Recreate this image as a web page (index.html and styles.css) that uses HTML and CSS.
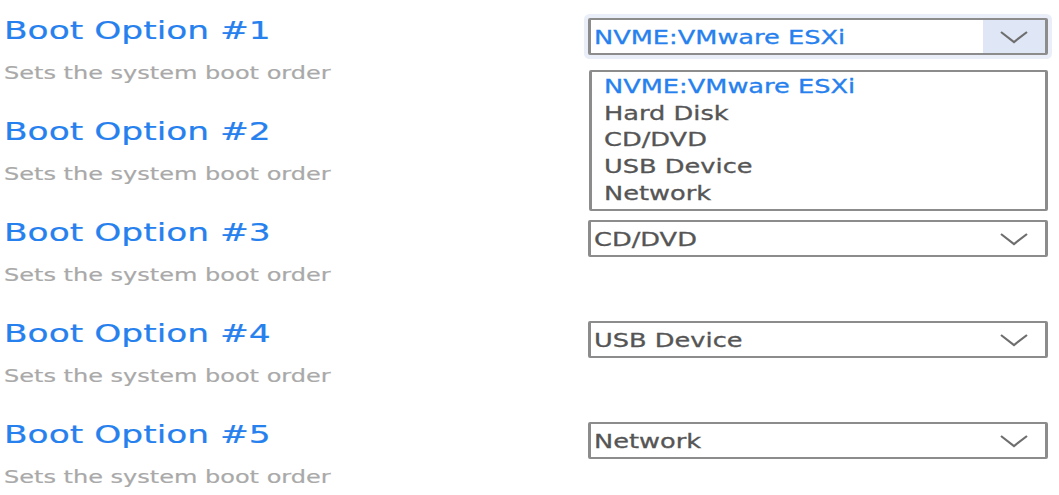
FILE: index.html
```html
<!DOCTYPE html>
<html lang="en">
<head>
    <meta charset="UTF-8">
    <meta name="viewport" content="width=device-width, initial-scale=1.0">
    <title>Boot Order</title>
    <link rel="stylesheet" href="styles.css">
</head>
<body>
    <main class="settings">

        <section class="option">
            <div class="option-text">
                <h2 class="option-title"><span class="wide">Boot Option #1</span></h2>
                <p class="option-desc"><span class="wide">Sets the system boot order</span></p>
            </div>
            <div class="picker">
                <div class="select is-focused">
                    <span class="select-value"><span class="wide">NVME:VMware ESXi</span></span>
                    <span class="select-arrow">
                        <svg width="28" height="14" viewBox="0 0 28 14"><polyline points="1,2 14,12 27,2" fill="none" stroke="#6e6e6e" stroke-width="2.2"/></svg>
                    </span>
                </div>
                <!-- open list sits over option #2 -->
                <ul class="select-list">
                    <li class="is-current"><span class="wide">NVME:VMware ESXi</span></li>
                    <li><span class="wide">Hard Disk</span></li>
                    <li><span class="wide">CD/DVD</span></li>
                    <li><span class="wide">USB Device</span></li>
                    <li><span class="wide">Network</span></li>
                </ul>
            </div>
        </section>

        <section class="option">
            <div class="option-text">
                <h2 class="option-title"><span class="wide">Boot Option #2</span></h2>
                <p class="option-desc"><span class="wide">Sets the system boot order</span></p>
            </div>
        </section>

        <section class="option">
            <div class="option-text">
                <h2 class="option-title"><span class="wide">Boot Option #3</span></h2>
                <p class="option-desc"><span class="wide">Sets the system boot order</span></p>
            </div>
            <div class="picker">
                <div class="select">
                    <span class="select-value"><span class="wide">CD/DVD</span></span>
                    <span class="select-arrow">
                        <svg width="28" height="14" viewBox="0 0 28 14"><polyline points="1,2 14,12 27,2" fill="none" stroke="#6e6e6e" stroke-width="2.2"/></svg>
                    </span>
                </div>
            </div>
        </section>

        <section class="option">
            <div class="option-text">
                <h2 class="option-title"><span class="wide">Boot Option #4</span></h2>
                <p class="option-desc"><span class="wide">Sets the system boot order</span></p>
            </div>
            <div class="picker">
                <div class="select">
                    <span class="select-value"><span class="wide">USB Device</span></span>
                    <span class="select-arrow">
                        <svg width="28" height="14" viewBox="0 0 28 14"><polyline points="1,2 14,12 27,2" fill="none" stroke="#6e6e6e" stroke-width="2.2"/></svg>
                    </span>
                </div>
            </div>
        </section>

        <section class="option">
            <div class="option-text">
                <h2 class="option-title"><span class="wide">Boot Option #5</span></h2>
                <p class="option-desc"><span class="wide">Sets the system boot order</span></p>
            </div>
            <div class="picker">
                <div class="select">
                    <span class="select-value"><span class="wide">Network</span></span>
                    <span class="select-arrow">
                        <svg width="28" height="14" viewBox="0 0 28 14"><polyline points="1,2 14,12 27,2" fill="none" stroke="#6e6e6e" stroke-width="2.2"/></svg>
                    </span>
                </div>
            </div>
        </section>

    </main>
</body>
</html>
```

FILE: styles.css
```css
/* Page */
body {
    margin: 0;
    background: #fff;
    font-family: "DejaVu Sans", Verdana, sans-serif;
}

/* the firmware font is drawn wide */
.wide {
    display: inline-block;
    white-space: nowrap;
    transform: scaleX(1.35);
    transform-origin: 0 50%;
}

.option {
    display: flex;
    justify-content: space-between;
    align-items: flex-start;
    height: 101px;
    padding: 0 11px 0 4px;
}

    .option-title {
        margin: 15px 0 0;
        font-size: 25.5px;
        font-weight: normal;
        line-height: 30px;
        color: #2680ee;
        -webkit-text-stroke: 0.2px #2680ee;
    }

    .option-desc {
        margin: 17px 0 0;
        font-size: 17.8px;
        line-height: 22px;
        color: #a9a9a9;
        -webkit-text-stroke: 0.2px #a9a9a9;
    }

/* Select boxes */
.picker {
    position: relative;
    width: 460px;
    margin-top: 18px;
}

.select {
    display: flex;
    height: 37px;
    box-sizing: border-box;
    border: 2px solid #8c8c8c;
    border-left-width: 3px;
    border-right-width: 3px;
    border-radius: 2px;
    background: #fff;
    font-size: 19px;
    color: #555;
    -webkit-text-stroke: 0.3px #555;
}

    .select-value {
        flex: 1;
        display: flex;
        align-items: center;
        padding-left: 3px;
    }

    .select-arrow {
        width: 62px;
        display: flex;
        align-items: center;
        justify-content: center;
    }

    .select.is-focused {
        box-shadow: 0 0 0 4px #e9eef8;
    }

        .select.is-focused .select-value {
            color: #2680ee;
            -webkit-text-stroke-color: #2680ee;
        }

        .select.is-focused .select-arrow {
            background: #dfe7f6;
        }

/* Open dropdown */
.select-list {
    position: absolute;
    top: 52px;
    left: 1px;
    right: 0;
    z-index: 2;
    margin: 0;
    padding: 1px 0 2px 12px;
    list-style: none;
    background: #fff;
    border: 2px solid #8c8c8c;
    border-left-width: 3px;
    border-right-width: 3px;
    border-radius: 2px;
    font-size: 19px;
    line-height: 26.7px;
    color: #555;
    -webkit-text-stroke: 0.3px #555;
}

    .select-list .is-current {
        color: #2680ee;
        -webkit-text-stroke-color: #2680ee;
    }
```
